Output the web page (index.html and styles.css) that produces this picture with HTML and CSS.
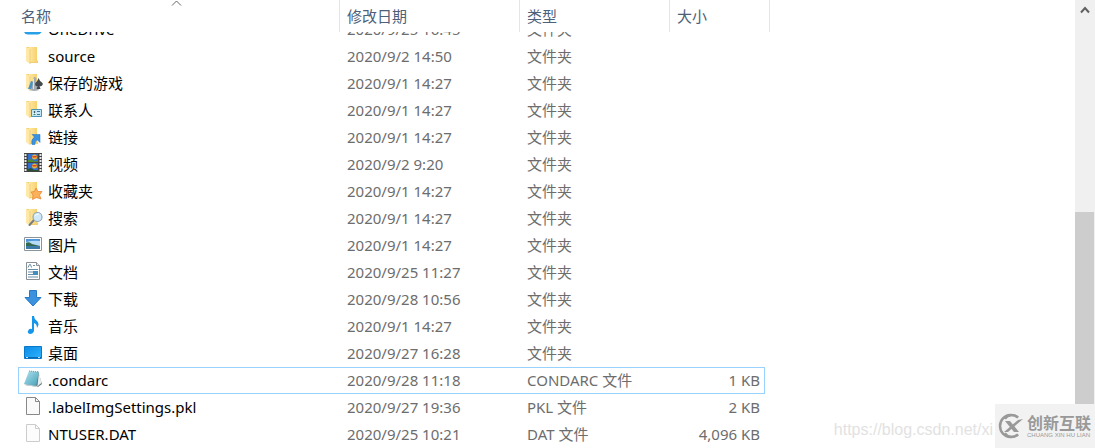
FILE: index.html
```html
<!DOCTYPE html>
<html lang="zh-CN">
<head>
    <meta charset="UTF-8">
    <meta name="viewport" content="width=device-width, initial-scale=1.0">
    <title>文件列表</title>
    <link rel="stylesheet" href="styles.css">
</head>
<body>
    <svg class="defs" width="0" height="0" aria-hidden="true">
        <defs>
            <linearGradient id="fold" x1="0" x2="1"><stop offset="0" stop-color="#ffe9a6"/><stop offset="1" stop-color="#f6d06c"/></linearGradient>
            <linearGradient id="desk" x1="0" y1="0" x2="1" y2="1"><stop offset="0" stop-color="#0a8ce8"/><stop offset="1" stop-color="#2fb2fb"/></linearGradient>
            <linearGradient id="note" x1="0" y1="0" x2="1" y2="1"><stop offset="0" stop-color="#b5e3ee"/><stop offset="1" stop-color="#3f9fb8"/></linearGradient>
            <symbol id="folder" viewBox="0 0 20 20">
                <path d="M3 2h11v13l1 1v2H6z" fill="#f3cf74"/>
                <path d="M6 2h8v15H6z" fill="url(#fold)"/>
                <path d="M3 2l4 2v15l-4-3z" fill="#ffe8a8"/>
                <path d="M7 4v15" stroke="#e7c162" stroke-width=".6"/>
            </symbol>
        </defs>
    </svg>

    <main class="explorer">
        <table class="files">
            <thead class="files-head">
                <tr>
                    <th class="sorted">名称
                        <svg class="sort-arrow" width="12" height="6" viewBox="0 0 12 6"><path d="M2 5.500L6.500 1l4.500 4.500" fill="none" stroke="#666"/></svg>
                    </th>
                    <th>修改日期</th>
                    <th>类型</th>
                    <th>大小</th>
                </tr>
            </thead>
            <tbody class="files-body">
                <tr>
                    <td><svg class="icon" viewBox="0 0 20 20"><path d="M5 16.500a4 4 0 0 1 0-8 5 5 0 0 1 9-1 4.500 4.500 0 0 1 1 9z" fill="#28a0e8"/></svg>OneDrive</td>
                    <td>2020/9/25 16:45</td><td>文件夹</td><td></td>
                </tr>
                <tr>
                    <td><svg class="icon" viewBox="0 0 20 20"><use href="#folder"/></svg>source</td>
                    <td>2020/9/2 14:50</td><td>文件夹</td><td></td>
                </tr>
                <tr>
                    <td><svg class="icon" viewBox="0 0 20 20"><use href="#folder"/>
                        <path d="M5 17l3-8 3 1-1 7z" fill="#4794c8"/>
                        <path d="M11 5a2.200 2.200 0 0 1 2 3.500l1 6.500 2 3q-5 2-9 0l2-3 1-6.500z" fill="#a3adb3"/>
                        <path d="M10.500 7v10" stroke="#dce4e8"/>
                        <path d="M15.500 6q1 3 4 5c1 2-1 4-3 3l1 3h-4l1-3c-2 1-3-2-2-3q2-2 3-5z" fill="#454a4e"/></svg>保存的游戏</td>
                    <td>2020/9/1 14:27</td><td>文件夹</td><td></td>
                </tr>
                <tr>
                    <td><svg class="icon" viewBox="0 0 20 20"><use href="#folder"/>
                        <path d="M8.500 10.500h10v7h-10z" fill="#c4e7f5" stroke="#4a93b6"/>
                        <path d="M10 12h3v4h-3z" fill="#fff"/><circle cx="11.500" cy="13" r="1" fill="#374f58"/><path d="M10 16q1.500-3 3 0z" fill="#468a66"/>
                        <path d="M14 12.500h3M14 15.500h3" stroke="#3c7998"/></svg>联系人</td>
                    <td>2020/9/1 14:27</td><td>文件夹</td><td></td>
                </tr>
                <tr>
                    <td><svg class="icon" viewBox="0 0 20 20"><use href="#folder"/>
                        <path d="M9 8.500h8v8l-2.500-2.500q-3 1-2.500 4.500l-3 0q-1.500-4.500 2.500-7.500z" fill="#3a92e2" stroke="#1d6fbd" stroke-width=".5"/></svg>链接</td>
                    <td>2020/9/1 14:27</td><td>文件夹</td><td></td>
                </tr>
                <tr>
                    <td><svg class="icon" viewBox="0 0 20 20">
                        <path d="M1 0h18v19H1z" fill="#444"/>
                        <path d="M5 1h10v8H5zM5 10h10v8H5z" fill="#2f6fd0"/>
                        <path d="M2.500 1v18M17.500 1v18" stroke="#e8e8e8" stroke-width="2" stroke-dasharray="2 1"/>
                        <circle cx="11.500" cy="4" r="2.500" fill="#edb32f"/><path d="M9 3h5l-1 1.500h-3z" fill="#d8432f"/><path d="M5 7l3-1 3 2h4v1H5z" fill="#4c8c35"/>
                        <circle cx="11.500" cy="13" r="2.500" fill="#edb32f"/><path d="M9 12h5l-1 1.500h-3z" fill="#d8432f"/><path d="M5 16l3-1 3 2h4v1H5z" fill="#294f35"/></svg>视频</td>
                    <td>2020/9/2 9:20</td><td>文件夹</td><td></td>
                </tr>
                <tr>
                    <td><svg class="icon" viewBox="0 0 20 20"><use href="#folder"/>
                        <path d="M13 8l2 3.500 4 0-2.500 3.500 1.500 4-4.500-1.500-4 2 .5-4.500-2-3 3.500-.5z" fill="#fbb05a" stroke="#e6802a" stroke-width=".7"/></svg>收藏夹</td>
                    <td>2020/9/1 14:27</td><td>文件夹</td><td></td>
                </tr>
                <tr>
                    <td><svg class="icon" viewBox="0 0 20 20"><use href="#folder"/>
                        <path d="M11 13l-4.500 5" stroke="#777f85" stroke-width="2" stroke-linecap="round"/>
                        <circle cx="14.500" cy="10" r="4.500" fill="#cfeafb" stroke="#93a7b4" stroke-width="1.200"/><path d="M12 9q1-2.500 4-2" stroke="#fff" fill="none"/></svg>搜索</td>
                    <td>2020/9/1 14:27</td><td>文件夹</td><td></td>
                </tr>
                <tr>
                    <td><svg class="icon" viewBox="0 0 20 20">
                        <path d="M1.500 3.500h17v13h-17z" fill="#fff" stroke="#8d9499"/>
                        <path d="M3 5h14v10H3z" fill="#b5dbf6"/><path d="M3 5h14v2q-7-1-14 1z" fill="#4d94d9"/>
                        <path d="M3 9q3-2 6 1l8 2v1H3z" fill="#35694f"/><path d="M3 12h14v3H3z" fill="#3d79a6"/></svg>图片</td>
                    <td>2020/9/1 14:27</td><td>文件夹</td><td></td>
                </tr>
                <tr>
                    <td><svg class="icon" viewBox="0 0 20 20">
                        <path d="M3.500 1.500h10l3 3v14h-13z" fill="#fff" stroke="#8a8f93"/><path d="M13.500 1.500v3h3" fill="#eee" stroke="#8a8f93"/>
                        <path d="M5 6.500l1.500-3h1l1 3M10 4.500h2M5 8.500h10M5 11h5M5 13.500h5M5 16h10" fill="none" stroke="#688da6"/>
                        <path d="M10 10h5v4h-5z" fill="#438dbd"/></svg>文档</td>
                    <td>2020/9/25 11:27</td><td>文件夹</td><td></td>
                </tr>
                <tr>
                    <td><svg class="icon" viewBox="0 0 20 20"><path d="M6.500 2.500h7v7h4.500l-8 8.500-8-8.500h4.500z" fill="#3b93df" stroke="#2879c4"/></svg>下载</td>
                    <td>2020/9/28 10:56</td><td>文件夹</td><td></td>
                </tr>
                <tr>
                    <td><svg class="icon" viewBox="0 0 20 20"><path d="M9 1h2q0 3 3 5 3 3 0 7 0-4-3-5v8q-1 3-4 3-3-1-2-3 1-3 4-2z" fill="#1596e8"/></svg>音乐</td>
                    <td>2020/9/1 14:27</td><td>文件夹</td><td></td>
                </tr>
                <tr>
                    <td><svg class="icon" viewBox="0 0 20 20"><path d="M1.500 4.500h17v12h-17z" fill="url(#desk)" stroke="#0878c8"/><path d="M2 15.500h16" stroke="#0c67ad"/><path d="M3 15.500h2M15 15.500h2" stroke="#b8e2fb"/></svg>桌面</td>
                    <td>2020/9/27 16:28</td><td>文件夹</td><td></td>
                </tr>
                <tr class="focused">
                    <td><svg class="icon" viewBox="0 0 20 20">
                        <path d="M15 2l4 13-4 3-13-2z" fill="#667b83"/><path d="M16 3l2.500 11-4 3z" fill="#e9efef"/>
                        <path d="M6 2l10 1-3 14-12-2z" fill="url(#note)"/><path d="M1 15l12 2 3-1-2 2-12-2z" fill="#d7dedf"/>
                        <path d="M6 2l10 1" stroke="#7c979f" stroke-dasharray="1 1"/></svg>.condarc</td>
                    <td>2020/9/28 11:18</td><td>CONDARC 文件</td><td>1 KB</td>
                </tr>
                <tr>
                    <td><svg class="icon" viewBox="0 0 20 20"><path d="M3.500 1.500h9l4 4v13h-13z" fill="#fafafa" stroke="#888"/><path d="M12.500 1.500v4h4" fill="none" stroke="#888"/></svg>.labelImgSettings.pkl</td>
                    <td>2020/9/27 19:36</td><td>PKL 文件</td><td>2 KB</td>
                </tr>
                <tr>
                    <td><svg class="icon" viewBox="0 0 20 20"><path d="M3.500 1.500h9l4 4v13h-13z" fill="#fcfcfc" stroke="#ccc"/><path d="M12.500 1.500v4h4" fill="none" stroke="#ccc"/></svg>NTUSER.DAT</td>
                    <td>2020/9/25 10:21</td><td>DAT 文件</td><td>4,096 KB</td>
                </tr>
            </tbody>
        </table>

        <div class="scrollbar">
            <button class="scroll-up" aria-label="向上滚动"><svg width="10" height="8" viewBox="0 0 10 8"><path d="M1 6.500L5 2l4 4.500" fill="none" stroke="#606060" stroke-width="2"/></svg></button>
            <div class="scroll-thumb"></div>
        </div>
    </main>

    <div class="watermark">
        <span class="watermark-url">https://blog.csdn.net/xi</span>
        <div class="brand">
            <svg width="26" height="26" viewBox="0 0 26 26">
                <path d="M20 4.500A11 11 0 1 0 20 21.500" fill="none" stroke="#999" stroke-width="2.500"/>
                <path d="M20 4.500A9 10 0 0 0 7 6M20 21.500A9 10 0 0 1 7 20" fill="none" stroke="#999" stroke-width="2"/>
                <path d="M7 8h5l9 11h-5z" fill="#999"/><path d="M25 6L10 19H6L20 7z" fill="#999"/>
            </svg>
            <div class="brand-text">
                <span class="brand-name">创新互联</span>
                <span class="brand-sub">CHUANG XIN HU LIAN</span>
            </div>
        </div>
    </div>
</body>
</html>
```
FILE: styles.css
```css
body {
    margin: 0;
    background-color: #fff;
    font-family: "Noto Sans", "Noto Sans CJK SC", sans-serif;
    font-size: 15px;
    color: #6d6d6d;
}
.defs {
    position: absolute;
}
.explorer {
    display: flex;
    justify-content: space-between;
    height: 100vh;
    overflow: hidden;
}

/* the list is scrolled to its end, so the rows sit on the bottom edge */
.files {
    display: flex;
    flex-direction: column;
    height: 100%;
}
.files-head {
    flex: none;
    display: block;
}
.files-body {
    flex: 1;
    min-height: 0;
    display: flex;
    flex-direction: column;
    justify-content: flex-end;
    overflow: hidden;
    padding: 0 5px 0 18px;
}
.files tr {
    display: grid;
    line-height: 27px;
}
.files-head tr {
    grid-template-columns: 340px 180px 150px 100px;
    color: #4c607a;
}
.files-head th {
    box-sizing: border-box;
    height: 32px;
    padding: 0 7px;
    border-right: 1px solid #e5e5e5;
    font-weight: normal;
    line-height: 32px;
    text-align: left;
}
.files-head th.sorted {
    position: relative;
    padding-left: 21px;
}
.sort-arrow {
    position: absolute;
    top: 0;
    left: 50%;
}
.files-body tr {
    flex: none;
    box-sizing: border-box;
    grid-template-columns: 322px 180px 150px 95px;
    height: 27px;
}
.files-body td {
    padding: 0 7px;
    white-space: nowrap;
}
.files-body td:first-child {
    display: flex;
    gap: 5px;
    padding-left: 5px;
    color: #000;
}
.files-body td:last-child {
    padding-right: 5px;
    text-align: right;
}
.files-body .focused {
    outline: 1px solid #99d1ff;
    outline-offset: -1px;
}
.icon {
    width: 20px;
    height: 20px;
    margin-top: 2px;
}

.scrollbar {
    display: flex;
    flex-direction: column;
    justify-content: space-between;
    width: 20px;
    background-color: #f0f0f0;
}
.scroll-up {
    height: 20px;
    padding: 0;
    border: 0;
    background: none;
    line-height: 0;
}
.scroll-thumb {
    height: 216px;
    margin: 0 1px 20px 0;
    background-color: #cdcdcd;
}

.watermark {
    position: absolute;
    right: 0;
    bottom: 0;
    display: flex;
    align-items: center;
    gap: 2px;
}
.watermark-url {
    color: #e2e2e2;
    font: 16px/20px "Liberation Sans", sans-serif;
    padding-top: 8px;
}
.brand {
    box-sizing: border-box;
    display: flex;
    align-items: center;
    gap: 3px;
    width: 100px;
    height: 44px;
    padding-left: 3px;
    background-color: #f2f2f2;
    color: #999;
}
.brand-text {
    display: flex;
    flex-direction: column;
    white-space: nowrap;
}
.brand-name {
    font: bold 16px/17px "Noto Sans CJK SC", sans-serif;
}
.brand-sub {
    font: 6px/8px "Liberation Sans", sans-serif;
}
```
